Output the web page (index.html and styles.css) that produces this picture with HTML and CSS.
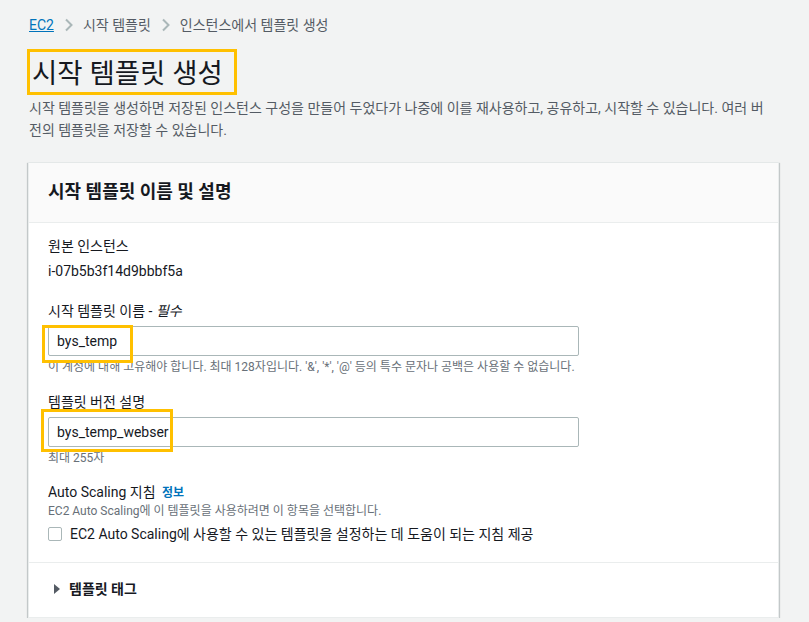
FILE: index.html
```html
<!DOCTYPE html>
<html lang="ko">
<head>
<meta charset="utf-8">
<title>시작 템플릿 생성</title>
<link rel="stylesheet" href="styles.css">
</head>
<body>
<div class="page">
  <nav class="crumbs">
    <a class="crumb-link" href="#">EC2</a>
    <svg class="chev" width="10" height="14" viewBox="0 0 10 14"><path d="M2 1.5 L7.5 7 L2 12.5" fill="none" stroke="#aab7b8" stroke-width="2"/></svg>
    <span class="crumb">시작 템플릿</span>
    <svg class="chev" width="10" height="14" viewBox="0 0 10 14"><path d="M2 1.5 L7.5 7 L2 12.5" fill="none" stroke="#aab7b8" stroke-width="2"/></svg>
    <span class="crumb current">인스턴스에서 템플릿 생성</span>
  </nav>

  <h1 class="title">시작 템플릿 생성</h1>
  <p class="desc">시작 템플릿을 생성하면 저장된 인스턴스 구성을 만들어 두었다가 나중에 이를 재사용하고, 공유하고, 시작할 수 있습니다. 여러 버전의 템플릿을 저장할 수 있습니다.</p>

  <section class="card">
    <header class="card-head">시작 템플릿 이름 및 설명</header>
    <div class="card-body">
      <div class="field">
        <div class="label">원본 인스턴스</div>
        <div class="value">i-07b5b3f14d9bbbf5a</div>
      </div>

      <div class="field gap">
        <div class="label">시작 템플릿 이름 - <i class="req">필수</i></div>
        <div class="input-wrap">
          <div class="input">bys_temp</div>
          <span class="mark mark-1"></span>
        </div>
        <div class="help">이 계정에 대해 고유해야 합니다. 최대 128자입니다. '&amp;', '*', '@' 등의 특수 문자나 공백은 사용할 수 없습니다.</div>
      </div>

      <div class="field gap">
        <div class="label">템플릿 버전 설명</div>
        <div class="input-wrap">
          <div class="input">bys_temp_webser</div>
          <span class="mark mark-2"></span>
        </div>
        <div class="help">최대 255자</div>
      </div>

      <div class="field gap">
        <div class="label tight">Auto Scaling 지침 <a class="info" href="#">정보</a></div>
        <div class="help">EC2 Auto Scaling에 이 템플릿을 사용하려면 이 항목을 선택합니다.</div>
        <label class="check">
          <span class="box"></span>
          <span>EC2 Auto Scaling에 사용할 수 있는 템플릿을 설정하는 데 도움이 되는 지침 제공</span>
        </label>
      </div>
    </div>
    <div class="card-foot">
      <svg class="tri" width="8" height="10" viewBox="0 0 8 10"><path d="M1 0 L7 5 L1 10 Z" fill="#545b64"/></svg>
      <span>템플릿 태그</span>
    </div>
  </section>
</div>
</body>
</html>
```

FILE: styles.css
```css
* { box-sizing: border-box; }
html, body { margin: 0; padding: 0; }
body {
  background: #f2f3f3;
  font-family: Roboto, "Noto Sans CJK KR", sans-serif;
  color: #16191f;
  font-size: 14px;
}
.page {
  padding: 15px 30px 0 28px;
}
.crumbs {
  display: flex;
  align-items: center;
  height: 20px;
  line-height: 20px;
  font-size: 14px;
  padding-left: 1px;
}
.crumb-link {
  color: #0073bb;
  text-decoration: underline;
}
.chev { margin: 0 9px 0 10px; }
.crumb { color: #545b64; }

.title {
  display: inline-block;
  margin: 14px 0 0 -1px;
  border: 3px solid #ffc000;
  padding: 0 11px 0 2px;
  height: 46px;
  line-height: 44px;
  font-size: 27.5px;
  font-weight: 400;
  color: #16191f;
}
.desc {
  margin: 2px 0 0 1px;
  max-width: 740px;
  font-size: 14px;
  line-height: 22px;
  color: #545b64;
}
.card {
  margin-top: 21px;
  background: #fff;
  border: 1px solid #eaeded;
  border-top-color: #e4e8e8;
  box-shadow: 0 1px 1px 0 rgba(0, 28, 36, 0.3), 1px 1px 1px 0 rgba(0, 28, 36, 0.15), -1px 1px 1px 0 rgba(0, 28, 36, 0.15);
}
.card-head {
  height: 60px;
  background: #fafafa;
  border-bottom: 1px solid #eaeded;
  padding: 15px 19px;
  line-height: 28px;
  font-size: 18px;
  font-weight: 700;
}
.card-body {
  padding: 12px 19px 17px;
  border-bottom: 1px solid #eaeded;
}
.label {
  line-height: 22px;
  font-size: 14px;
}
.label.tight { line-height: 20px; margin-top: 1px; }
.req { font-style: italic; }
.value {
  margin-top: 3px;
  line-height: 22px;
  font-size: 14px;
}
.field.gap { margin-top: 18px; }
.field.gap + .field.gap { margin-top: 16px; }
.input-wrap {
  position: relative;
  margin-top: 4px;
  width: 531px;
}
.input {
  height: 30px;
  border: 1px solid #aab7b8;
  border-radius: 2px;
  padding: 0 8px;
  line-height: 28px;
  font-size: 14px;
  color: #16191f;
  background: #fff;
}
.mark {
  position: absolute;
  border: 3px solid #ffc000;
  pointer-events: none;
}
.mark-1 { left: -6px; top: -1px; width: 91px; height: 38px; }
.mark-2 { left: -7px; top: -8px; width: 132px; height: 43px; }
.help {
  margin-top: 3px;
  line-height: 16px;
  font-size: 12px;
  color: #687078;
}
.label.tight + .help { margin-top: 0; }
.info {
  color: #0073bb;
  font-size: 12px;
  font-weight: 700;
  text-decoration: none;
  margin-left: 3px;
}
.check {
  display: flex;
  align-items: center;
  margin-top: 4px;
  line-height: 22px;
  font-size: 14px;
}
.box {
  width: 14px;
  height: 14px;
  border: 1px solid #aab7b8;
  border-radius: 2px;
  margin-right: 8px;
  background: #fff;
}
.card-foot {
  display: flex;
  align-items: center;
  padding: 15px 19px 17px 24px;
  line-height: 22px;
  font-size: 14px;
  font-weight: 700;
  color: #16191f;
}
.tri { margin-right: 8px; }
```
